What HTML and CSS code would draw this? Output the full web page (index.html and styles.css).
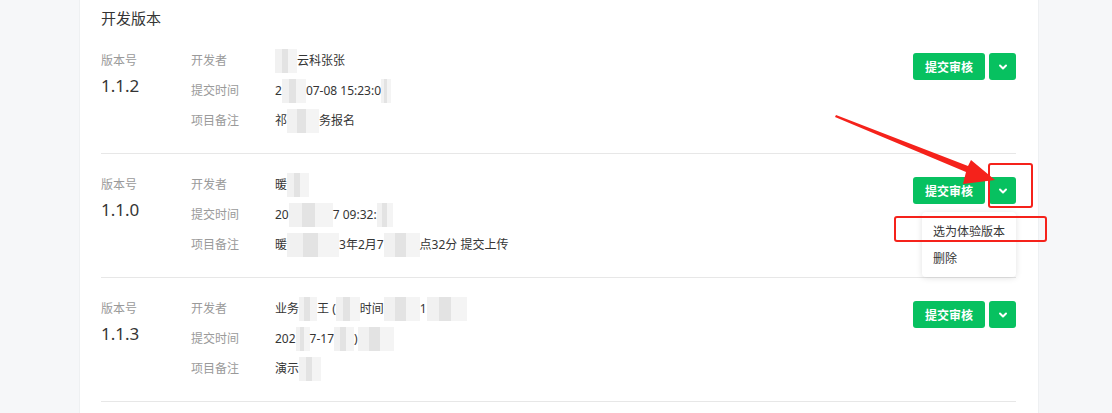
FILE: index.html
```html
<!DOCTYPE html>
<html lang="zh-CN">
<head>
    <meta charset="UTF-8">
    <meta name="viewport" content="width=device-width, initial-scale=1.0">
    <title>开发版本</title>
    <link rel="stylesheet" href="styles.css">
</head>
<body>
    <div class="page">
        <div class="panel">
            <div class="title">开发版本</div>

            <div class="version">
                <div class="ver-col">
                    <div class="label">版本号</div>
                    <div class="ver-num">1.1.2</div>
                </div>
                <div class="info">
                    <div class="line"><span class="key">开发者</span><span class="val"><span class="mz w22"></span>云科张张</span></div>
                    <div class="line"><span class="key">提交时间</span><span class="val">2<span class="mz w24"></span>07-08 15:23:0<span class="mz w10"></span></span></div>
                    <div class="line"><span class="key">项目备注</span><span class="val">祁<span class="mz w32"></span>务报名</span></div>
                </div>
                <div class="actions">
                    <button class="btn-submit">提交审核</button>
                    <button class="btn-more"><svg width="10" height="10" viewBox="0 0 10 10"><path d="M2 3.5l3 3 3-3" fill="none" stroke="#fff" stroke-width="2" stroke-linecap="round" stroke-linejoin="round"/></svg></button>
                </div>
            </div>

            <div class="version">
                <div class="ver-col">
                    <div class="label">版本号</div>
                    <div class="ver-num">1.1.0</div>
                </div>
                <div class="info">
                    <div class="line"><span class="key">开发者</span><span class="val">暖<span class="mz w22"></span></span></div>
                    <div class="line"><span class="key">提交时间</span><span class="val">20<span class="mz w44"></span>7 09:32:<span class="mz w16"></span></span></div>
                    <div class="line"><span class="key">项目备注</span><span class="val">暖<span class="mz w52"></span>3年2月7<span class="mz w36"></span>点32分 提交上传</span></div>
                </div>
                <div class="actions">
                    <button class="btn-submit">提交审核</button>
                    <button class="btn-more"><svg width="10" height="10" viewBox="0 0 10 10"><path d="M2 3.5l3 3 3-3" fill="none" stroke="#fff" stroke-width="2" stroke-linecap="round" stroke-linejoin="round"/></svg></button>
                    <div class="menu">
                        <div class="menu-item">选为体验版本</div>
                        <div class="menu-item">删除</div>
                    </div>
                </div>
            </div>

            <div class="version">
                <div class="ver-col">
                    <div class="label">版本号</div>
                    <div class="ver-num">1.1.3</div>
                </div>
                <div class="info">
                    <div class="line"><span class="key">开发者</span><span class="val">业务<span class="mz w18"></span>王 (<span class="mz w24"></span>时间<span class="mz w36"></span>1<span class="mz w40"></span></span></div>
                    <div class="line"><span class="key">提交时间</span><span class="val">202<span class="mz w14"></span>7-17<span class="mz w20"></span>)<span class="mz w36"></span></span></div>
                    <div class="line"><span class="key">项目备注</span><span class="val">演示<span class="mz w22"></span></span></div>
                </div>
                <div class="actions">
                    <button class="btn-submit">提交审核</button>
                    <button class="btn-more"><svg width="10" height="10" viewBox="0 0 10 10"><path d="M2 3.5l3 3 3-3" fill="none" stroke="#fff" stroke-width="2" stroke-linecap="round" stroke-linejoin="round"/></svg></button>
                </div>
            </div>
        </div>

        <!-- red annotation marks drawn over the screenshot -->
        <svg class="marks" width="1112" height="413" viewBox="0 0 1112 413">
            <polygon points="836,115 968,166 971,160 995,180 963,184 966,172 835,117" fill="#f5221b"/>
            <rect x="989" y="164" width="43" height="43" rx="2" fill="none" stroke="#f5221b" stroke-width="2"/>
            <rect x="895" y="217" width="151" height="24" rx="2" fill="none" stroke="#f5221b" stroke-width="2"/>
        </svg>
    </div>
</body>
</html>
```

FILE: styles.css
```css
body {
    margin: 0;
    background-color: #f6f7f9;
    font-family: "Noto Sans", "Noto Sans CJK SC", sans-serif;
    color: #333;
    overflow: hidden;
}

.page {
    position: relative;
    height: 413px;
    padding-left: 79px;
}

.panel {
    width: 915px;
    height: 413px;
    padding: 8px 22px 0 21px;
    background-color: #fff;
    border-left: 1px solid #eef0f2;
    border-right: 1px solid #eef0f2;
}

.title {
    font-size: 15px;
    line-height: 20px;
    margin-bottom: 2px;
    color: #353535;
}

.version {
    display: flex;
    padding: 16px 0 17px 0;
    border-bottom: 1px solid #e7e7e7;
}

.ver-col {
    width: 90px;
}

.label, .key {
    font-size: 12px;
    line-height: 30px;
    color: #9a9a9a;
}

.ver-num {
    font-size: 17px;
    line-height: 20px;
    color: #353535;
}

.info {
    flex: 1;
}

.line {
    display: flex;
    height: 30px;
    align-items: center;
}

.key {
    width: 84px;
}

.val {
    font-size: 12px;
    line-height: 30px;
    color: #353535;
    display: flex;
    align-items: center;
}

.mz {
    display: inline-block;
    height: 24px;
    background: linear-gradient(90deg, #f1f1f1 0 30%, #e3e3e3 30% 60%, #f4f4f4 60%);
}

.w10 { width: 10px; }
.w14 { width: 14px; }
.w16 { width: 16px; }
.w18 { width: 18px; }
.w20 { width: 20px; }
.w22 { width: 22px; }
.w24 { width: 24px; }
.w32 { width: 32px; }
.w36 { width: 36px; }
.w40 { width: 40px; }
.w44 { width: 44px; }
.w52 { width: 52px; }

.actions {
    position: relative;
    display: flex;
    gap: 4px;
    align-self: flex-start;
    margin-top: 7px;
}

.actions button {
    height: 27px;
    border: none;
    border-radius: 3px;
    background-color: #07c160;
    color: #fff;
    cursor: pointer;
    font-family: "Noto Sans CJK SC", sans-serif;
}

.btn-submit {
    width: 72px;
    font-size: 12px;
    font-weight: 700;
}

.btn-more {
    width: 27px;
    padding: 0;
    display: flex;
    align-items: center;
    justify-content: center;
}

.menu {
    position: absolute;
    top: 35px;
    right: 0;
    width: 94px;
    padding: 6px 0 5px 0;
    background-color: #fff;
    border-radius: 4px;
    box-shadow: 0 1px 6px rgba(0, 0, 0, 0.12);
}

.menu-item {
    font-size: 12px;
    line-height: 27px;
    padding-left: 11px;
    color: #353535;
}

.marks {
    position: absolute;
    top: 0;
    left: 0;
    pointer-events: none;
}
```
